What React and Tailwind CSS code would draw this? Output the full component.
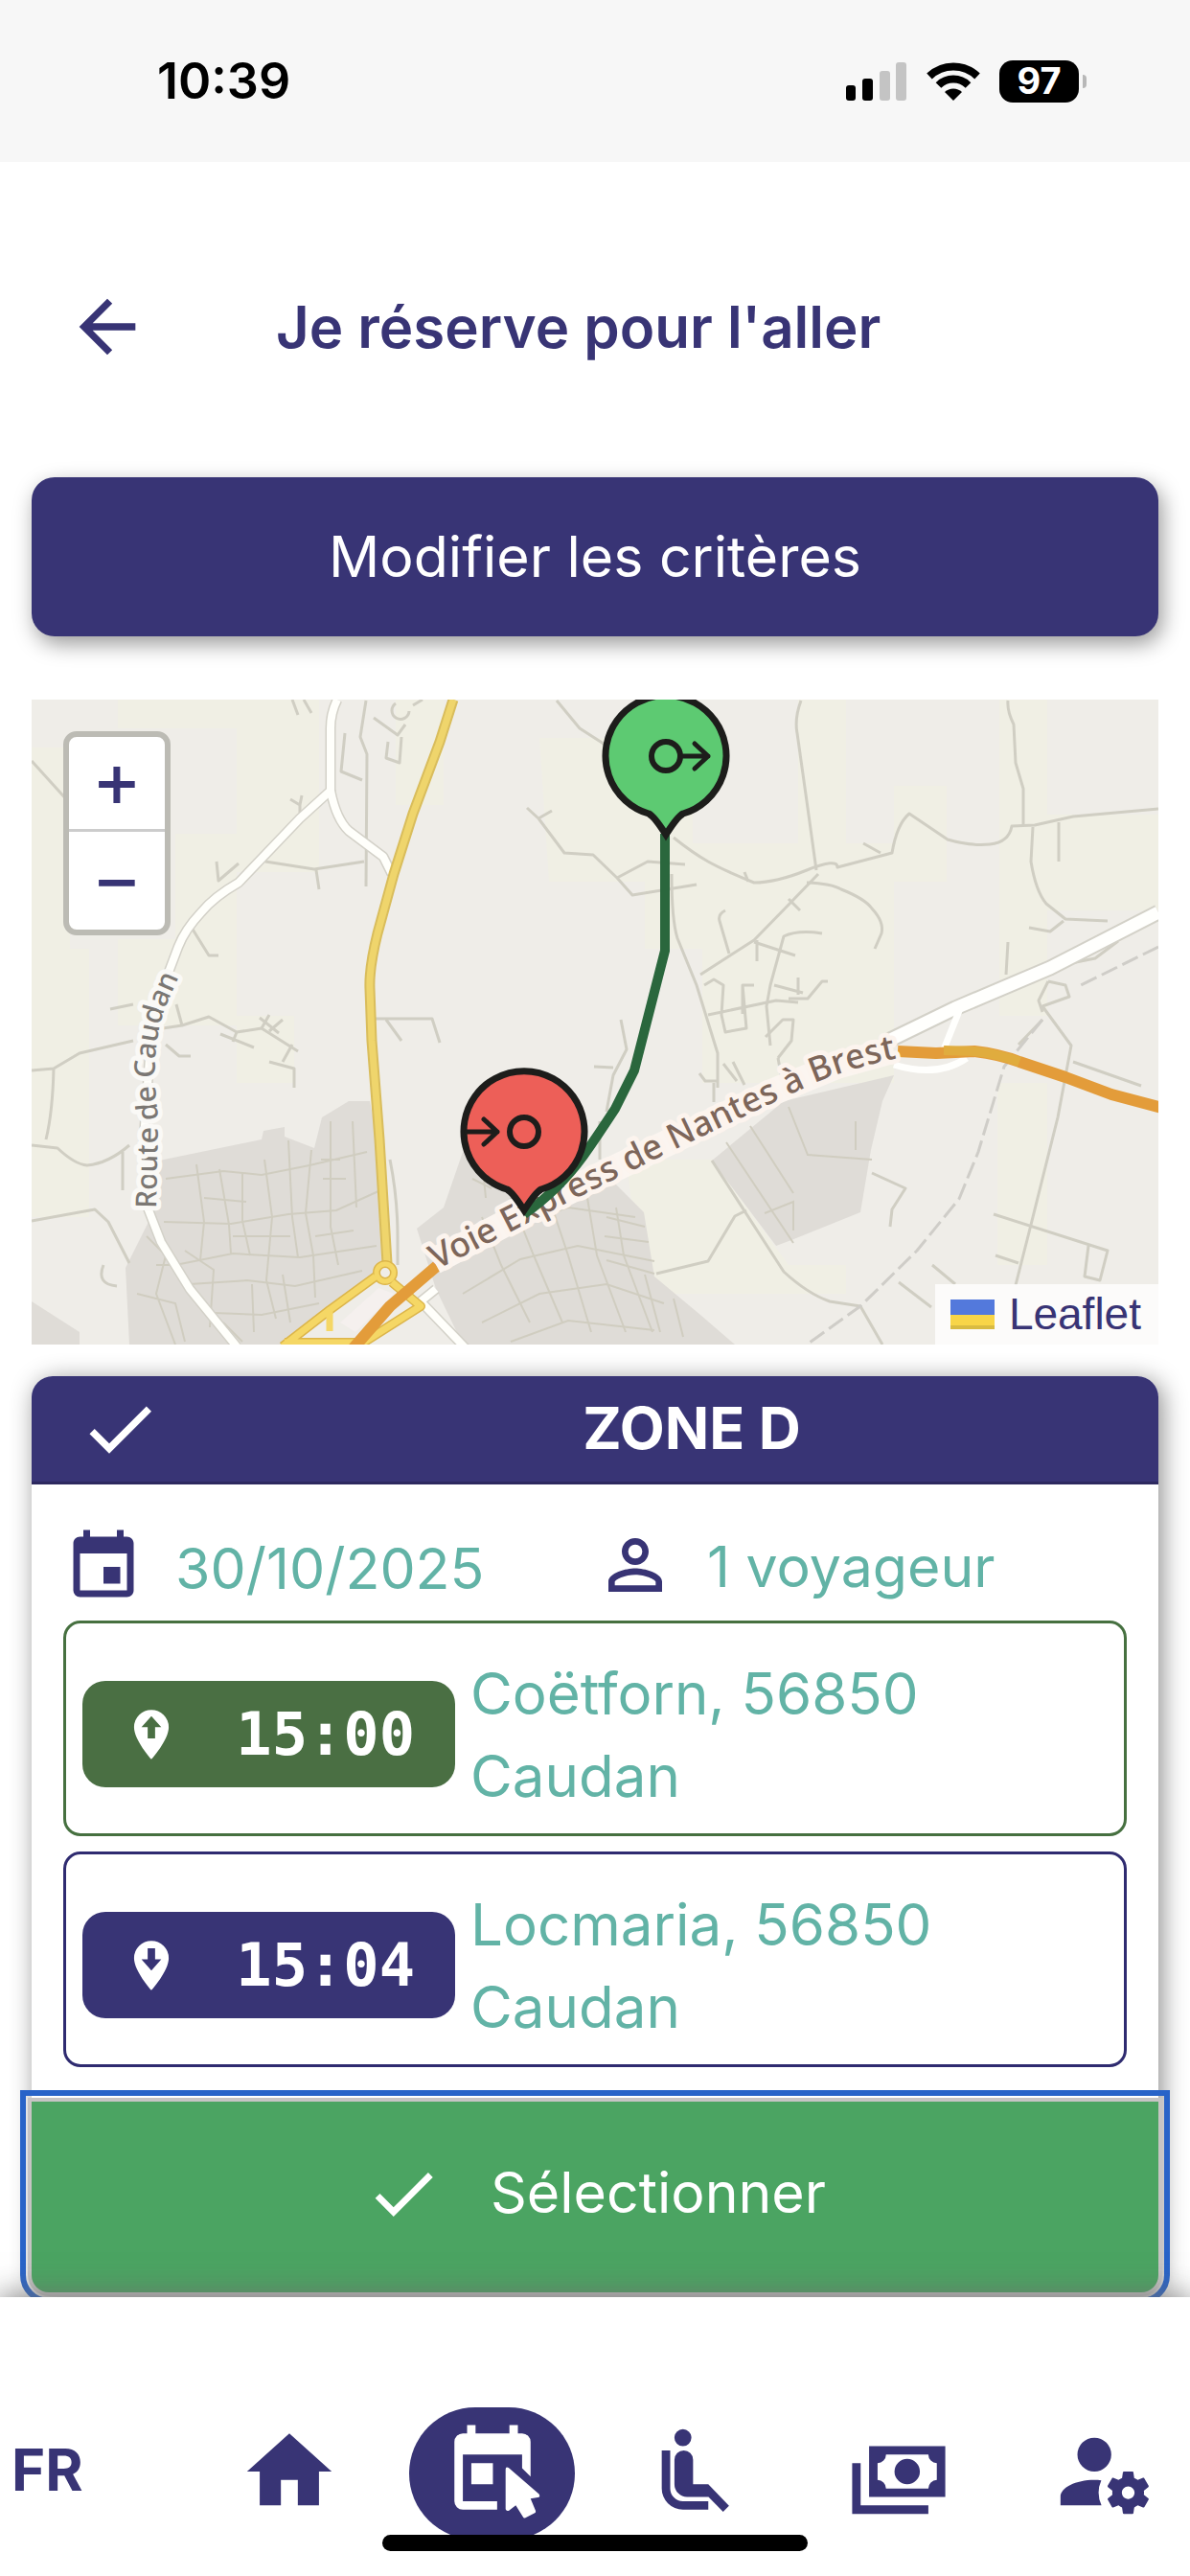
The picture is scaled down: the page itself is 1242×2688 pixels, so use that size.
import { MdArrowBack, MdCheck, MdEvent, MdHome, MdPersonOutline } from 'react-icons/md';

const stops = [
  {
    id: 'depart',
    time: '15:00',
    address: 'Coëtforn, 56850 Caudan',
    box: 'border-[#467040]',
    chip: 'bg-[#4a6f43]',
    arrow: 'M12 4.5l4 4.5h-2.5v4.5h-3V9H8z',
  },
  {
    id: 'arrivee',
    time: '15:04',
    address: 'Locmaria, 56850 Caudan',
    box: 'border-[#2f2b70]',
    chip: 'bg-[#383475]',
    arrow: 'M12 14l4-4.5h-2.5V5h-3v4.5H8z',
  },
];

// Petites rues et chemins
const lanes = [
  'M349 1L343 39L350 57L349 195',
  'M244 169L295 177L347 169M297 178L300 198',
  'M327 35L323 75L345 84M357 19L382 37L390 26M372 44L370 61L384 66L386 39',
  'M272 0l6 16M284 0l8 14M380 4a9 9 0 1 0 14 8M398 6l10-6',
  'M0 64L38 106M548 1L572 30L600 48L612 60',
  'M517 113L529 124L556 160L586 162L611 186L643 169L682 172M611 186L627 204L694 193M529 124l14-8',
  'M82 323L106 318M137 343L157 340L185 331L214 347L240 343L278 367M197 349L232 363',
  'M248 378L274 385V405M157 340l-6-22',
  'M240 343l8-14M248 346l14-12M238 332l20 16M262 378l10-18M214 347l-4 10',
  'M0 387L23 385L50 369L106 356M23 385Q22 430 15 459M140 360l14 12h12',
  'M0 465L27 468Q45 485 58 486Q80 484 102 465M95 472V512',
  'M0 544L66 532L80 545L102 588M75 590q-8 20 14 22',
  'M359 333H418L426 358M370 334l16 22M167 238L185 267H195M193 169L195 189L216 171',
  'M270 104l10 6l2-10M280 110v8',
  'M803 1Q796 20 799 35L809 106L819 178',
  'M670 144Q690 160 706 169T754 191Q777 191 809 178T841 175L898 160Q903 130 916 119L956 146Q980 153 1000 151T1023 132L1047 131L1087 122L1176 114',
  'M1019 1Q1018 12 1025 26L1027 66L1035 93V131',
  'M1045 133L1043 169Q1048 200 1059 213L1079 229L1123 231M1072 128V169M1041 238L1063 242L1077 231',
  'M668 182Q668 230 674 249L694 298L716 369V405M698 287L754 251L793 211L821 182M744 180l4 10',
  'M809 191Q835 192 845 198Q870 208 877 218Q890 232 887 244L880 260',
  'M724 220Q716 224 718 231L728 265M825 244Q800 240 785 247L771 298L767 320L771 361M754 253L797 267M757 251v22',
  'M706 329L777 314L800 316M790 312h20l15 -18h6M702 298l10-6l10 6L720 329L724 347L746 343L742 298h12M742 298v30',
  'M779 374L793 356L795 334H784L766 352M775 298l30 8M800 290v18',
  'M697 390l6 8h14M722 380l14 18M732 378l12 24M779 374l4 22M712 400v20M868 150l18 10M790 208l12 12',
  'M1019 253L1017 287M1061 294L1079 298L1083 310L1055 320L1085 361L1071 436L1043 548L1027 611M1061 294l-10 20l4 12',
  'M1087 378L1158 403M877 494L912 510L898 532L896 550M1055 334L1030 360',
  'M1004 537L1123 575L1115 606L1099 602L1103 570M1006 580l24 8M940 590l24 20M905 608l34 26',
  'M710 481L785 597Q810 620 833 628L865 633L888 673M652 599L706 586L734 539l12-6',
  'M615 334L621 365L607 392L600 430M587 383L607 384M593 440v40',
  'M374 480q8 40 8 80v30M1080 276l30-6l24-18',
];

// Rues denses des quartiers bâtis
const townStreets = [
  'M140 500l60-8l40 4l50-10l60-14M138 545l70 2l60-10l50-4l44-20M150 590l60-12l70 4l80-12',
  'M165 610l60-4l50 6l70-16M190 640l50 2l60-12M120 560l20 20l-10 40l20 53M110 620l40 10l10 40',
  'M172 485l8 60l-4 40M196 490l10 58l2 30M220 494v50l8 36M243 480l8 60l-6 66l10 40M268 460l4 80l6 42',
  'M292 470l-6 66l8 44l2 44M312 440v110l8 40M335 440l4 90M302 480h20M304 500h24M180 520l44 4M210 560h60',
  'M296 560l40-6M230 610l2 50M262 600l8 50M160 575l30 20l-4 60M200 650l20 20M130 590l24 0',
  'M440 580l60-30l60-20l70 10M450 620l60-36l60-14l80 16M470 650l60-30l70-10l60 20M500 670l60-22l90 10',
  'M470 540l20 50l30 60M500 520l24 60l30 70M540 520l20 60l24 80M580 520l10 60l30 80M610 530l8 50l30 80',
  'M600 540l40 10M598 560l46 6M600 585l50 14M460 500l20 10M470 480l4 40M640 600l16 60M670 625l10 40',
];

const urbanBlocks = [
  'M133 481L240 459L242 450L264 446V456L295 468L303 436L331 419H353L363 470L371 588L264 673H102L98 593L125 539Z',
  'M402 552L430 530L450 472L470 500L607 503L639 535L650 602L698 642L734 673H450L422 615Z',
  'M710 481L785 419L900 392L888 419L876 470L865 535L793 564L777 570Z',
  'M0 628L50 660V673H0Z',
];

function Pin({ x, y, fill, children }) {
  return (
    <g transform={`translate(${x} ${y})`} stroke="#1d1d1b" fill="none">
      <path
        d="M-18 60A63 63 0 1 1 18 60Q12 63 0 82Q-12 63 -18 60Z"
        fill={fill}
        strokeWidth="7"
        strokeLinejoin="miter"
      />
      <circle r="15" strokeWidth="6" />
      <g strokeWidth="5" strokeLinecap="round" strokeLinejoin="round">{children}</g>
    </g>
  );
}

function MapDrawing() {
  return (
    <svg viewBox="0 0 1176 673" className="block w-full" role="img" aria-label="Carte du trajet">
      <defs>
        <path id="caudan" d="M130 531L132 435Q128 400 129 375Q132 340 140 320L160 275" />
        <path id="voie" d="M423 595L520 545L567 521L666 472L760 427L820 399Q860 382 925 370" />
      </defs>

      <rect width="1176" height="673" fill="#efede8" />
      <g fill="#f0efe4">
        <path d="M0 50H40V260H60V540H0ZM90 0H214V30H90ZM150 140H214V340H90V250H150ZM214 0H300V180H214ZM214 330h60v70h-60ZM380 0H430V110H380Z" />
        <path d="M530 40H690V190H540ZM640 150H900V400H700V260H640ZM800 0H850V150H800ZM900 90H955V190H900ZM1010 0H1060V120H1176V220H1060V330H1010ZM1008 400H1060V590H1008ZM620 480H710L790 590H850V620H640Z" />
      </g>

      <g fill="#dfdcd7">{urbanBlocks.map(d => <path key={d} d={d} />)}</g>
      <g fill="none" stroke="#d0cdc0" strokeWidth="2">
        {townStreets.map(d => <path key={d} d={d} />)}
        <path d="M725 462l70 105M750 445l45 70M790 425l20 50l67 5M860 440v30M765 536l30-12v30" />
      </g>

      <g fill="none" stroke="#d0cec3" strokeWidth="3" strokeLinejoin="round">
        {lanes.map(d => <path key={d} d={d} />)}
        <path d="M1176 258L1095 298M1055 334L1015 383L988 472L968 521L924 575L865 633L809 673" stroke="#cfcdc8" strokeDasharray="18 6" />
      </g>

      {/* White roads */}
      <g fill="none" strokeLinejoin="round">
        <g stroke="#d3d1c8" strokeWidth="11">
          <path d="M319 0Q312 14 312 30V95L280 124L216 191Q190 206 177 222Q160 240 153 258L133 311L123 374L117 459L121 530L135 566L165 615L214 675" />
          <path d="M312 95Q318 125 331 137L367 164L376 182M422 615L406 628L456 680" />
        </g>
        <g stroke="#fffffb" strokeWidth="8">
          <path d="M319 0Q312 14 312 30V95L280 124L216 191Q190 206 177 222Q160 240 153 258L133 311L123 374L117 459L121 530L135 566L165 615L214 675" />
          <path d="M312 95Q318 125 331 137L367 164L376 182M422 615L406 628L456 680" />
        </g>
        <path d="M890 358L964 322L1063 280L1176 222" stroke="#d3d1c8" strokeWidth="17" />
        <path d="M890 358L964 322L1063 280L1176 222" stroke="#fffffd" strokeWidth="13" />
        <path d="M968 325L952 365M900 381Q945 395 976 374" stroke="#fffffd" strokeWidth="7" />
      </g>

      {/* Main roads */}
      <g fill="none" strokeLinejoin="round">
        <path d="M440 0L426 44L398 119L378 182L361 244Q352 280 353 302L355 356L363 459L371 588" stroke="#d9bd5c" strokeWidth="11" />
        <path d="M440 0L426 44L398 119L378 182L361 244Q352 280 353 302L355 356L363 459L371 588" stroke="#efd56c" strokeWidth="7" />
        <path d="M322 650l40-36l16 6l-40 40z" fill="#f5f0ee" />
        <g stroke="#dcb54a" strokeWidth="10">
          <path d="M359 602L311 637L262 675M376 608L406 633L343 673M264 671H343" />
          <circle cx="369" cy="598" r="9" strokeWidth="8" />
        </g>
        <g stroke="#f5d765" strokeWidth="7">
          <path d="M359 602L311 637L262 675M376 608L406 633L343 673M264 671H343M311 637v22" />
          <circle cx="369" cy="598" r="9" strokeWidth="5" />
        </g>
        <path d="M430 585L374 633L333 680" stroke="#e39c3a" strokeWidth="12" />
        <path d="M904 367L944 369L984 367Q1010 370 1031 378L1079 394L1127 412L1180 426" stroke="#e39c3a" strokeWidth="12" />
        <path d="M952 366L984 367Q1010 370 1031 378" stroke="#e0ac3e" strokeWidth="10" />
      </g>

      {/* Road names */}
      <path d="M420 586L520 533L607 490L700 445L777 408L840 382L898 366" fill="none" stroke="#fbf5f0" strokeWidth="28" />
      <g fontFamily="'Noto Sans', sans-serif" fontWeight="500" paintOrder="stroke" strokeLinejoin="round">
        <text fontSize="30" fill="#7b7773" stroke="#faf9f6" strokeWidth="10">
          <textPath href="#caudan">Route de Caudan</textPath>
        </text>
        <text fontSize="36" fill="#7d665a" stroke="#fcf4ee" strokeWidth="10">
          <textPath href="#voie">Voie Express de Nantes à Brest</textPath>
        </text>
      </g>

      <path d="M661 140V262L629 387L609 427Q590 456 576 476Q550 512 514 537" fill="none" stroke="#2a673d" strokeWidth="10" />
      <Pin x={514} y={451} fill="#ed5f58">
        <path d="M-60 0H-28M-42 -13L-28 0L-42 13" />
      </Pin>
      <Pin x={662} y={59} fill="#5dca72">
        <path d="M17 0H44M30 -13L44 0L30 13" />
      </Pin>
    </svg>
  );
}

function StatusBar() {
  return (
    <div className="flex h-[169px] items-center justify-between bg-[#f7f7f7] pl-[164px] pr-[108px] text-black">
      <span className="text-[52px] font-semibold">10:39</span>
      <div className="flex items-center gap-5">
        <svg viewBox="0 0 64 40" className="h-10 w-16" aria-hidden="true">
          <rect x="0" y="24" width="10" height="16" rx="3" />
          <rect x="17" y="17" width="11" height="23" rx="3" />
          <rect x="35" y="9" width="11" height="31" rx="3" fill="#c4c4c4" />
          <rect x="52" y="0" width="11" height="40" rx="3" fill="#c4c4c4" />
        </svg>
        <svg viewBox="0 0 56 40" className="h-10 w-14" fill="none" stroke="#000" strokeWidth="8" aria-hidden="true">
          <path d="M3 14.500A36 36 0 0 1 53 14.500" />
          <path d="M12.500 24A22 22 0 0 1 43.500 24" />
          <path d="M28 40l-9-9a13 13 0 0 1 18 0z" fill="#000" stroke="none" />
        </svg>
        <div className="flex items-center gap-1">
          <span className="flex h-11 w-[83px] items-center justify-center rounded-[14px] bg-black text-[38px] font-bold text-white">97</span>
          <span className="h-3.5 w-1 rounded-r-full bg-[#b8b8b8]" />
        </div>
      </div>
    </div>
  );
}

function StopRow({ stop }) {
  return (
    <li className={`flex h-[225px] items-center gap-4 rounded-[18px] border-3 pl-[17px] pr-4 pt-3 ${stop.box}`}>
      <span className={`flex h-[111px] w-[389px] shrink-0 items-center justify-between rounded-3xl pl-[41px] pr-[42px] text-white ${stop.chip}`}>
        <svg viewBox="0 0 24 24" className="size-[62px]" fill="currentColor" fillRule="evenodd" aria-hidden="true">
          <path d={`M12 2a7 7 0 0 0-7 7c0 5.250 7 13 7 13s7-7.750 7-13a7 7 0 0 0-7-7z${stop.arrow}`} />
        </svg>
        <time className="font-['DejaVu_Sans_Mono',monospace] text-[62px] font-bold leading-none">{stop.time}</time>
      </span>
      <span className="max-w-[560px] text-[60px] leading-[86px] text-[#62b3a6]">{stop.address}</span>
    </li>
  );
}

const navItems = [
  { label: 'Accueil', icon: <MdHome className="size-[106px]" /> },
  {
    label: 'Réserver',
    active: true,
    icon: (
      <svg viewBox="0 0 24 24" className="size-[106px]" fill="currentColor">
        <path d="M6 1v2H5a2 2 0 0 0-2 2v14a2 2 0 0 0 2 2h8.100v-2H5V8h14v3.200l2 2V5a2 2 0 0 0-2-2h-1V1h-2v2H8V1zM7 10h5.100v5H7z" />
        <path d="M15.100 11.500q0-.8.700-.4l7.200 6.200q.4.700-.3.800l-1.700.3 1.200 2.900q.1.400-.2.500l-2.200 1.100q-.4.200-.6-.2L17.500 20l-1.600 1.200q-.6.300-.8-.3z" />
      </svg>
    ),
  },
  {
    label: 'Mes trajets',
    icon: (
      <svg viewBox="0 0 24 24" className="size-[106px]" fill="currentColor">
        <circle cx="9" cy="4" r="2" />
        <path d="M4 7v9a5 5 0 0 0 5 5h6v-2H9a3 3 0 0 1-3-3V7z" />
        <path d="M9.200 7A2.200 2.200 0 0 0 7 9.200V15a3 3 0 0 0 3 3h5.050l3.450 3.500 1.400-1.400L15 15h-3.600V9.200A2.200 2.200 0 0 0 9.200 7z" />
      </svg>
    ),
  },
  {
    label: 'Paiements',
    icon: (
      <svg viewBox="0 0 24 24" className="size-[106px]" fill="currentColor">
        <path d="M5 6h18v12H5V6m9 3a3 3 0 0 1 3 3 3 3 0 0 1-3 3 3 3 0 0 1-3-3 3 3 0 0 1 3-3M9 8a2 2 0 0 1-2 2v4a2 2 0 0 1 2 2h10a2 2 0 0 1 2-2v-4a2 2 0 0 1-2-2H9m-8 2h2v10h16v2H1V10z" />
      </svg>
    ),
  },
  {
    label: 'Mon compte',
    icon: (
      <svg viewBox="0 0 24 24" className="size-[106px]" fill="currentColor">
        <path d="M10 4a4 4 0 0 0-4 4 4 4 0 0 0 4 4 4 4 0 0 0 4-4 4 4 0 0 0-4-4M17 12C16.870 12 16.760 12.090 16.740 12.210L16.550 13.530C16.250 13.660 15.960 13.820 15.700 14L14.460 13.500C14.350 13.500 14.220 13.500 14.150 13.630L13.150 15.360C13.090 15.470 13.110 15.600 13.210 15.680L14.270 16.500C14.250 16.670 14.240 16.830 14.240 17C14.240 17.170 14.250 17.330 14.270 17.500L13.210 18.320C13.120 18.400 13.090 18.530 13.150 18.640L14.150 20.370C14.210 20.500 14.340 20.500 14.460 20.500L15.700 20C15.960 20.180 16.240 20.350 16.550 20.470L16.740 21.790C16.760 21.910 16.860 22 17 22H19C19.110 22 19.220 21.910 19.240 21.790L19.430 20.470C19.730 20.340 20 20.180 20.270 20L21.500 20.500C21.630 20.500 21.760 20.500 21.830 20.370L22.830 18.640C22.890 18.530 22.860 18.400 22.770 18.320L21.700 17.500C21.720 17.330 21.740 17.170 21.740 17C21.740 16.830 21.730 16.670 21.700 16.500L22.760 15.680C22.850 15.600 22.880 15.470 22.820 15.360L21.820 13.630C21.760 13.500 21.630 13.500 21.500 13.500L20.270 14C20 13.820 19.730 13.650 19.420 13.530L19.230 12.210C19.220 12.090 19.110 12 19 12H17M10 14C5.580 14 2 15.790 2 18V20H11.680A7 7 0 0 1 11 17A7 7 0 0 1 11.640 14.090C11.110 14.030 10.560 14 10 14M18 15.500C18.830 15.500 19.500 16.170 19.500 17C19.500 17.830 18.830 18.500 18 18.500C17.160 18.500 16.500 17.830 16.500 17C16.500 16.170 17.170 15.500 18 15.500Z" />
      </svg>
    ),
  },
];

function BottomNav() {
  return (
    <nav className="sticky bottom-0 z-10 mt-auto flex h-[291px] items-start bg-white pr-[5px] pt-[115px] text-[#383475] shadow-[0_-2px_30px_rgba(110,110,110,0.9)]">
      <button type="button" className="flex h-[138px] w-[215px] shrink-0 items-center pb-2 pl-3 text-[60px] font-bold">FR</button>
      <div className="flex flex-1 justify-between">
        {navItems.map(item => (
          <button
            key={item.label}
            type="button"
            aria-label={item.label}
            className={`flex h-[138px] w-[173px] items-center justify-center rounded-full pb-1 ${item.active ? 'bg-[#383475] text-white' : ''}`}
          >
            {item.icon}
          </button>
        ))}
      </div>
      <span className="absolute bottom-[26px] left-1/2 h-[17px] w-[444px] -translate-x-1/2 rounded-full bg-black" />
    </nav>
  );
}

export default function App() {
  return (
    <div className="flex min-h-screen flex-col bg-white font-['Inter',sans-serif] text-[#383475]">
      <StatusBar />

      <header className="flex items-center gap-[132px] pb-28 pl-[68px] pt-[127px]">
        <button type="button" aria-label="Retour">
          <MdArrowBack className="size-[88px]" />
        </button>
        <h1 className="text-[60px] font-semibold leading-[90px]">Je réserve pour l'aller</h1>
      </header>

      <main className="px-[33px] pb-[5px]">
        <button
          type="button"
          className="h-[166px] w-full rounded-3xl bg-[#383475] text-[59px] text-white shadow-[4px_8px_22px_rgba(0,0,0,0.4)]"
        >
          Modifier les critères
        </button>

        <div className="relative mt-[66px] overflow-hidden">
          <MapDrawing />
          <div className="absolute left-[33px] top-[33px] flex w-[112px] flex-col overflow-hidden rounded-[14px] border-6 border-[#bcbbb4] bg-white font-['DejaVu_Sans',sans-serif] text-[60px] font-bold leading-none">
            <button type="button" aria-label="Zoom avant" className="h-[99px] border-b-3 border-[#ccc]">+</button>
            <button type="button" aria-label="Zoom arrière" className="h-[102px]">−</button>
          </div>
          <a
            href="#leaflet"
            className="absolute bottom-0 right-0 flex h-[63px] items-center gap-[15px] bg-white/80 pl-4 pr-[18px] font-['Liberation_Sans',sans-serif] text-[46px]"
          >
            <svg viewBox="0 0 46 31" className="h-[31px] w-[46px]" aria-hidden="true">
              <path d="M0 0h46v16H0z" fill="#5379dc" />
              <path d="M0 16h46v12H0z" fill="#f8d548" />
              <path d="M0 27h46v4H0z" fill="#d9bb42" />
            </svg>
            Leaflet
          </a>
        </div>

        <section className="mt-[33px] rounded-[22px] shadow-[4px_4px_26px_rgba(0,0,0,0.45)]">
          <div className="flex h-[113px] items-center rounded-t-[22px] border-b-3 border-[#2d295f] bg-[#383475] pl-12 text-white">
            <MdCheck className="size-[88px]" />
            <h2 className="flex-1 pl-[66px] text-center text-[61px] font-bold">ZONE D</h2>
          </div>

          <div className="bg-white px-[33px] pb-9 pt-[42px]">
            <div className="grid grid-cols-2 pb-4 text-[59px] leading-[84px] text-[#62b3a6]">
              <p className="flex items-center gap-[33px]">
                <MdEvent className="size-[84px] text-[#383475]" />
                <span className="pt-1">30/10/2025</span>
              </p>
              <p className="flex h-[84px] items-center gap-[33px]">
                <MdPersonOutline className="size-[84px] text-[#383475]" />
                <span className="pt-1">1 voyageur</span>
              </p>
            </div>
            <ul className="-mt-1 flex flex-col gap-4">
              {stops.map(stop => <StopRow key={stop.id} stop={stop} />)}
            </ul>
          </div>

          <button
            type="button"
            className="flex h-[199px] w-full items-center justify-center gap-[50px] rounded-b-[18px] bg-[#4ba462] pb-2 text-[59px] text-white shadow-[0_0_0_4px_#c6c4c4] outline-6 outline-offset-6 outline-[#2863c8]"
          >
            <MdCheck className="size-[82px]" />
            Sélectionner
          </button>
        </section>
      </main>

      <BottomNav />
    </div>
  );
}
